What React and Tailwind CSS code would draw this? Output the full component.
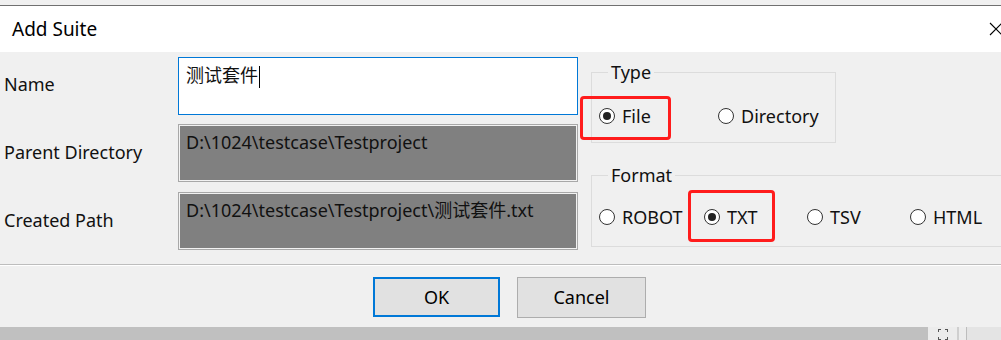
import React from "react";

function Radio({ checked }) {
  return (
    <span className="inline-flex h-[16px] w-[16px] shrink-0 items-center justify-center rounded-full border-[1.5px] border-[#333333] bg-white">
      {checked && <span className="h-[8px] w-[8px] rounded-full bg-[#222222]" />}
    </span>
  );
}

function RadioItem({ label, checked, width, mark }) {
  return (
    <div className={`relative flex h-[24px] items-center gap-[7px] ${width}`}>
      <Radio checked={checked} />
      <span className="leading-none">{label}</span>
      {mark}
    </div>
  );
}

export default function App() {
  const font = { fontFamily: '"Noto Sans", "Noto Sans CJK SC", sans-serif' };
  return (
    <div className="h-[340px] w-[1001px] overflow-hidden bg-[#f0f0f0] text-[18px] text-[#111]" style={font}>
      <div className="h-[5px] bg-[#f0f0f0]" />
      <div className="h-[1px] bg-[#707070]" />
      {/* title bar */}
      <div className="flex h-[46px] items-center justify-between bg-white pl-[12px]">
        <span className="text-[19px] text-black">Add Suite</span>
        <svg width="14" height="14" viewBox="0 0 14 14" className="mr-[-2px]">
          <path d="M1 1 L13 13 M13 1 L1 13" stroke="#000" strokeWidth="1.1" />
        </svg>
      </div>
      {/* body */}
      <div className="flex h-[212px] overflow-hidden">
        <div className="flex flex-col gap-[9px] pt-[5px]">
          <div className="flex h-[58px] items-center">
            <div className="w-[178px] pb-[4px] pl-[4px]">Name</div>
            <div className="h-[58px] w-[400px] border border-[#0078d7] bg-white pl-[7px] pt-[4px]">
              <span className="leading-[24px]">测试套件</span>
              <span className="ml-[1px] inline-block h-[22px] w-[1px] bg-black align-middle" />
            </div>
          </div>
          <div className="flex h-[58px] items-center">
            <div className="w-[178px] pb-[2px] pl-[4px]">Parent Directory</div>
            <div className="h-[58px] w-[400px] border border-[#a8a8a8] bg-[#808080] pl-[7px] pt-[5px] leading-[24px] shadow-[inset_0_0_0_1px_#f2f2f2]">
              D:\1024\testcase\Testproject
            </div>
          </div>
          <div className="mt-[1px] flex h-[58px] items-center">
            <div className="w-[178px] pb-[2px] pl-[4px]">Created Path</div>
            <div className="h-[58px] w-[400px] border border-[#a8a8a8] bg-[#808080] pl-[7px] pt-[5px] leading-[24px] shadow-[inset_0_0_0_1px_#f2f2f2]">
              D:\1024\testcase\Testproject\测试套件.txt
            </div>
          </div>
        </div>
        <div className="ml-[13px] flex flex-col pt-[8px]">
          <fieldset className="w-[245px] border border-[#dcdcdc] px-[7px] pb-[14px] pt-[20px]">
            <legend className="ml-[9px] px-[3px] leading-[24px]">Type</legend>
            <div className="flex">
              <RadioItem
                label="File"
                checked
                width="w-[119px]"
                mark={<span className="pointer-events-none absolute left-[-19px] top-[-8px] h-[44px] w-[91px] rounded-[4px] border-[3px] border-[#ff1c1c]" />}
              />
              <RadioItem label="Directory" />
            </div>
          </fieldset>
          <fieldset className="mt-[20px] w-[440px] border border-[#dcdcdc] px-[7px] pb-[17px] pt-[18px]">
            <legend className="ml-[9px] px-[3px] leading-[24px]">Format</legend>
            <div className="flex">
              <RadioItem label="ROBOT" width="w-[105px]" />
              <RadioItem
                label="TXT"
                checked
                width="w-[103px]"
                mark={<span className="pointer-events-none absolute left-[-16px] top-[-15px] h-[52px] w-[87px] rounded-[4px] border-[3px] border-[#ff1c1c]" />}
              />
              <RadioItem label="TSV" width="w-[103px]" />
              <RadioItem label="HTML" />
            </div>
          </fieldset>
        </div>
      </div>
      {/* separator */}
      <div className="h-[1px] bg-[#bdbdbd]" />
      <div className="h-[1px] bg-white" />
      {/* footer */}
      <div className="flex h-[61px] items-start justify-center gap-[17px] pl-[18px] pt-[11px]">
        <button className="h-[40px] w-[127px] border-2 border-[#0078d7] bg-[#e1e1e1] text-[18px] text-black">OK</button>
        <button className="h-[41px] w-[129px] border border-[#adadad] bg-[#e1e1e1] text-[18px] text-black">Cancel</button>
      </div>
      {/* bottom strip */}
      <div className="flex h-[13px] bg-[#c0c0c0]">
        <div className="flex-1" />
        <div className="relative w-[29px] bg-[#ececec]">
          <span className="absolute left-[10px] top-[2px] h-[3px] w-[3px] border-l border-t border-[#555]" />
          <span className="absolute left-[17px] top-[2px] h-[3px] w-[3px] border-r border-t border-[#555]" />
          <span className="absolute left-[10px] top-[10px] h-[3px] w-[3px] border-b border-l border-[#555]" />
          <span className="absolute left-[17px] top-[10px] h-[3px] w-[3px] border-b border-r border-[#555]" />
        </div>
        <div className="w-[2px] bg-[#cfcfcf]" />
        <div className="w-[7px] bg-[#ececec]" />
        <div className="w-[1px] bg-[#bdbdbd]" />
        <div className="w-[34px] bg-[#e4e4e4]" />
      </div>
    </div>
  );
}
